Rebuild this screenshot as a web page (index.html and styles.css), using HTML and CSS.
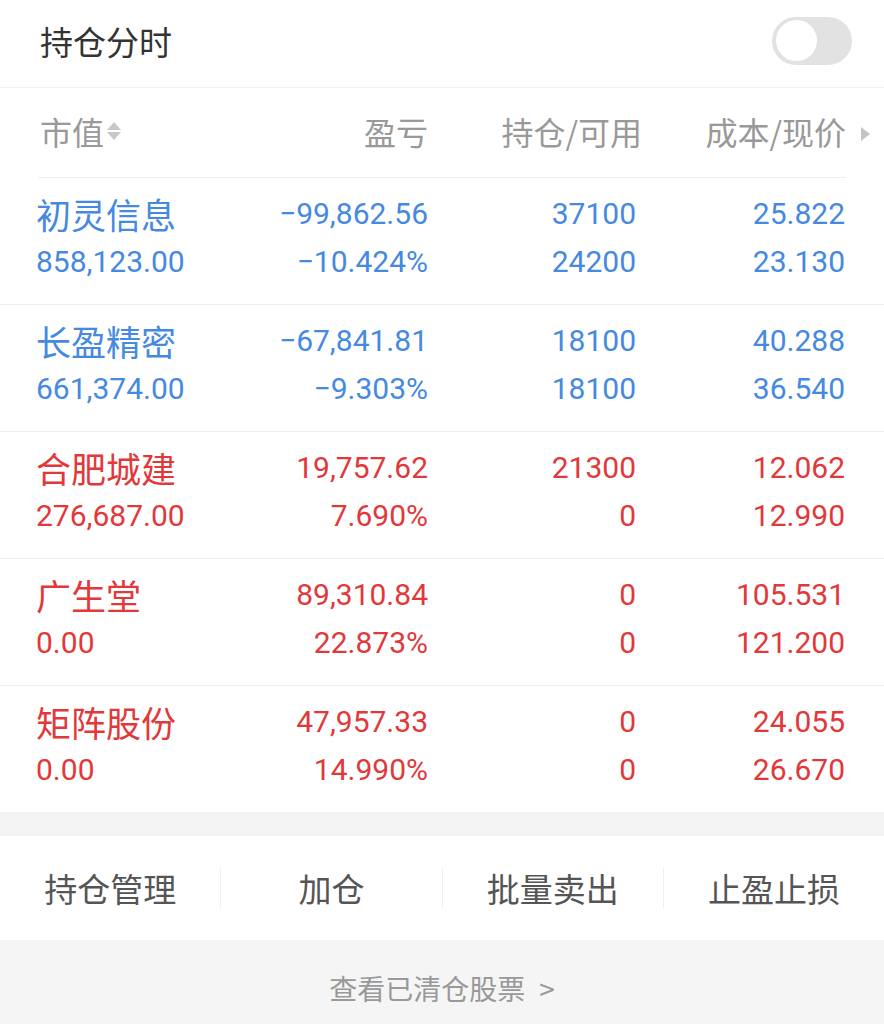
FILE: index.html
```html
<!DOCTYPE html>
<html lang="zh-CN">
<head>
    <meta charset="UTF-8">
    <meta name="viewport" content="width=device-width, initial-scale=1.0">
    <title>持仓分时</title>
    <link rel="stylesheet" href="styles.css">
</head>
<body>
    <div class="title-bar">
        <span class="title">持仓分时</span>
        <span class="switch"><span class="knob"></span></span>
    </div>

    <div class="table-head">
        <div class="th th-left">市值<span class="sort"><i class="up"></i><i class="down"></i></span></div>
        <div class="th">盈亏</div>
        <div class="th th-hold">持仓/可用</div>
        <div class="th">成本/现价<span class="more"></span></div>
    </div>

    <div class="rows">
        <div class="row down">
            <div class="cell left"><div class="name">初灵信息</div><div>858,123.00</div></div>
            <div class="cell"><div>−99,862.56</div><div>−10.424%</div></div>
            <div class="cell"><div>37100</div><div>24200</div></div>
            <div class="cell"><div>25.822</div><div>23.130</div></div>
        </div>
        <div class="row down">
            <div class="cell left"><div class="name">长盈精密</div><div>661,374.00</div></div>
            <div class="cell"><div>−67,841.81</div><div>−9.303%</div></div>
            <div class="cell"><div>18100</div><div>18100</div></div>
            <div class="cell"><div>40.288</div><div>36.540</div></div>
        </div>
        <div class="row up">
            <div class="cell left"><div class="name">合肥城建</div><div>276,687.00</div></div>
            <div class="cell"><div>19,757.62</div><div>7.690%</div></div>
            <div class="cell"><div>21300</div><div>0</div></div>
            <div class="cell"><div>12.062</div><div>12.990</div></div>
        </div>
        <div class="row up">
            <div class="cell left"><div class="name">广生堂</div><div>0.00</div></div>
            <div class="cell"><div>89,310.84</div><div>22.873%</div></div>
            <div class="cell"><div>0</div><div>0</div></div>
            <div class="cell"><div>105.531</div><div>121.200</div></div>
        </div>
        <div class="row up">
            <div class="cell left"><div class="name">矩阵股份</div><div>0.00</div></div>
            <div class="cell"><div>47,957.33</div><div>14.990%</div></div>
            <div class="cell"><div>0</div><div>0</div></div>
            <div class="cell"><div>24.055</div><div>26.670</div></div>
        </div>
    </div>

    <div class="gap"></div>

    <div class="actions">
        <div class="action">持仓管理</div>
        <div class="action">加仓</div>
        <div class="action">批量卖出</div>
        <div class="action">止盈止损</div>
    </div>

    <div class="cleared">查看已清仓股票<span class="arrow">&gt;</span></div>
</body>
</html>
```

FILE: styles.css
```css
body {
    margin: 0;
    background-color: #fff;
    font-family: Roboto, "Noto Sans CJK SC", sans-serif;
    color: #333;
}
.title-bar {
    display: flex;
    justify-content: space-between;
    align-items: center;
    height: 81px;
    padding: 0 32px 6px 40px;
    border-bottom: 1px solid #f2f2f2;
}
.title {
    font-family: "Noto Sans CJK SC", sans-serif;
    font-size: 33px;
    color: #333;
}
.switch {
    display: flex;
    align-items: center;
    width: 80px;
    height: 48px;
    border-radius: 24px;
    background-color: #e2e2e2;
    padding-left: 4px;
    box-sizing: border-box;
}
.knob {
    width: 41px;
    height: 41px;
    border-radius: 50%;
    background-color: #fff;
}
.table-head {
    display: grid;
    grid-template-columns: 198px 192px 208px 210px;
    align-items: center;
    height: 85px;
    padding-bottom: 4px;
    margin: 0 38px;
    border-bottom: 1px solid #eee;
    font-family: "Noto Sans CJK SC", sans-serif;
    font-size: 32px;
    color: #999;
}
.th {
    text-align: right;
    white-space: nowrap;
}
.th-left {
    text-align: left;
    margin-left: 2px;
    display: flex;
    align-items: center;
}
.th-hold {
    margin-right: -6px;
}
.sort {
    display: inline-flex;
    flex-direction: column;
    gap: 2px;
    margin-left: 3px;
}
.sort i {
    width: 0;
    height: 0;
    border-left: 7px solid transparent;
    border-right: 7px solid transparent;
}
.sort .up {
    border-bottom: 8px solid #c8c8c8;
}
.sort .down {
    border-top: 8px solid #c8c8c8;
}
.more {
    display: inline-block;
    width: 0;
    height: 0;
    margin-left: 15px;
    margin-right: -24px;
    border-top: 7px solid transparent;
    border-bottom: 7px solid transparent;
    border-left: 9px solid #c4c4c4;
    vertical-align: 4px;
}
.row {
    display: grid;
    grid-template-columns: 200px 192px 208px 209px;
    padding: 12px 39px 18px 36px;
    border-bottom: 1px solid #efefef;
    font-size: 30px;
    line-height: 48px;
}
.row:last-child {
    border-bottom: none;
}
.row.down {
    color: #4589e0;
}
.row.up {
    color: #e2383a;
}
.cell {
    text-align: right;
    white-space: nowrap;
}
.cell.left {
    text-align: left;
}
.name {
    font-family: "Noto Sans CJK SC", sans-serif;
    font-size: 35px;
}
.gap {
    height: 24px;
    background-color: #f4f4f4;
}
.actions {
    display: flex;
    align-items: center;
    height: 104px;
    font-family: "Noto Sans CJK SC", sans-serif;
    font-size: 33px;
    color: #555;
}
.action {
    flex: 1;
    text-align: center;
    line-height: 40px;
}
.action + .action {
    border-left: 1px solid #f0f0f0;
}
.cleared {
    background-color: #f5f5f5;
    padding: 29px 0 40px;
    line-height: 38px;
    text-align: center;
    font-family: "Noto Sans CJK SC", sans-serif;
    font-size: 28px;
    color: #999;
}
.arrow {
    margin-left: 14px;
}
```
